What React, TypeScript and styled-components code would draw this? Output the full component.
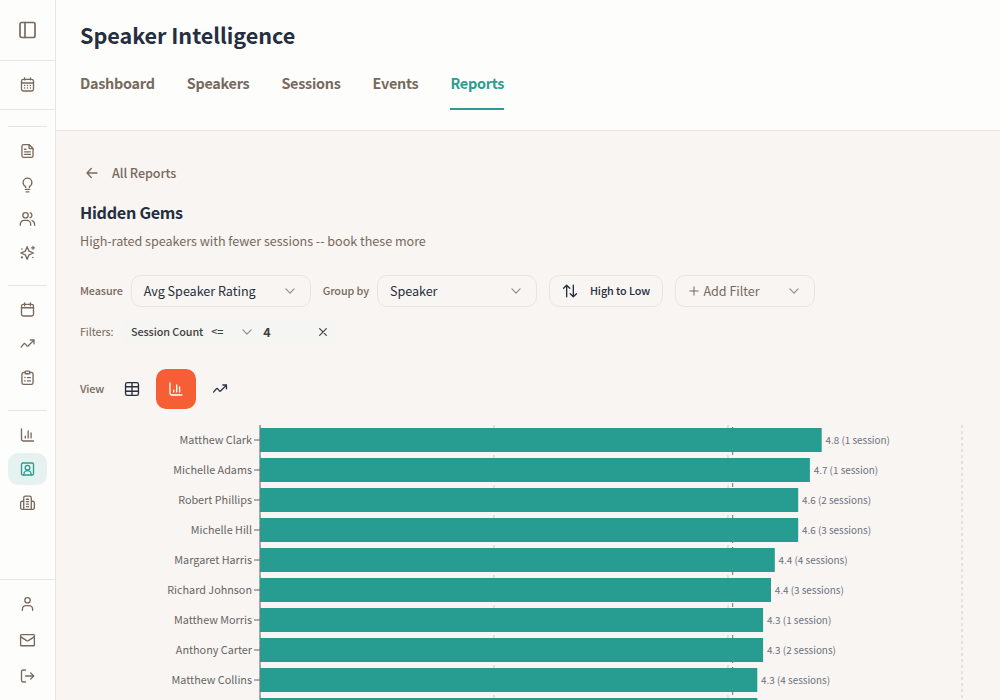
import React from "react";
import styled, { createGlobalStyle, css } from "styled-components";

const teal = "#2a9d8f";
const ink = "#252f3f";
const stone = "#78695d";
const line = "#e8e5e2";

const GlobalStyle = createGlobalStyle`
  * { box-sizing: border-box; }
  body {
    margin: 0;
    height: 700px;
    overflow: hidden;
    background: #f9f5f2;
    color: ${ink};
    font-family: "Noto Sans CJK SC", "Open Sans", sans-serif;
    -webkit-font-smoothing: antialiased;
  }
  button { font: inherit; color: inherit; background: none; border: 0; padding: 0; }
`;

const Shell = styled.div`
  display: flex;
  height: 700px;
  overflow: hidden;
`;

const Sidebar = styled.aside`
  width: 56px;
  flex: none;
  display: flex;
  flex-direction: column;
  background: #fdfdfc;
  border-right: 1px solid ${line};
  color: ${stone};
`;

const SideBlock = styled.div<{ $height: number }>`
  height: ${(p) => p.$height}px;
  display: flex;
  align-items: center;
  justify-content: center;
  border-bottom: 1px solid ${line};
`;

const NavGroups = styled.nav`
  flex: 1;
  padding: 16px 8px 0;
`;

const NavGroup = styled.div`
  display: flex;
  flex-direction: column;
  gap: 2px;
  padding-top: 8px;
  margin-bottom: 16px;
  border-top: 1px solid ${line};
`;

const NavItem = styled.button<{ $active?: boolean }>`
  height: 32px;
  display: flex;
  align-items: center;
  justify-content: center;
  border-radius: 10px;
  ${(p) => p.$active && css`background: #e6f2f0; color: ${teal};`}
`;

const SideFooter = styled.div`
  height: 121px;
  display: flex;
  flex-direction: column;
  gap: 4px;
  padding: 8px;
  border-top: 1px solid ${line};
`;

const Main = styled.main`
  flex: 1;
  min-width: 0;
  display: flex;
  flex-direction: column;
`;

const Header = styled.header`
  height: 131px;
  flex: none;
  padding: 19px 24px 0;
  background: #fdfdfc;
  border-bottom: 1px solid ${line};
`;

const Title = styled.h1`
  margin: 0;
  font-size: 21.6px;
  line-height: 32px;
  font-weight: 700;
  letter-spacing: -0.05px;
`;

const Tabs = styled.div`
  display: flex;
  gap: 32px;
  margin-top: 16px;
`;

const Tab = styled.button<{ $active?: boolean }>`
  height: 43px;
  padding-bottom: 9px;
  font-size: 14.4px;
  line-height: 32px;
  font-weight: 600;
  letter-spacing: -0.265px;
  color: ${(p) => (p.$active ? teal : stone)};
  border-bottom: 2px solid ${(p) => (p.$active ? teal : "transparent")};
`;

const Content = styled.section`
  display: flex;
  flex-direction: column;
  align-items: flex-start;
  padding: 26px 24px 0;
`;

const Caption = styled.span`
  padding-bottom: 2px;
  white-space: nowrap;
`;

const BackButton = styled.button`
  display: flex;
  align-items: center;
  gap: 12px;
  height: 32px;
  padding-left: 4px;
  font-size: 12.6px;
  font-weight: 500;
  letter-spacing: -0.08px;
  color: ${stone};
`;

const ReportTitle = styled.h2`
  margin: 9px 0 0;
  font-size: 16.2px;
  line-height: 28px;
  font-weight: 600;
  letter-spacing: -0.3px;
`;

const Description = styled.p`
  margin: 5px 0 0;
  font-size: 12.6px;
  line-height: 20px;
  letter-spacing: -0.025px;
  color: ${stone};
`;

const Controls = styled.div`
  display: flex;
  align-items: center;
  gap: 12px;
  margin-top: 24px;
`;

const Field = styled.label`
  display: flex;
  align-items: center;
  gap: 8px;
`;

const Label = styled.span<{ $weight?: number }>`
  padding-bottom: 2px;
  font-size: 10.8px;
  line-height: 16px;
  font-weight: ${(p) => p.$weight ?? 500};
  letter-spacing: -0.1px;
  color: ${stone};
`;

const Select = styled.button<{ $width: number; $muted?: boolean }>`
  width: ${(p) => p.$width}px;
  height: 32px;
  display: flex;
  align-items: center;
  justify-content: space-between;
  padding: 0 12px;
  border: 1px solid ${line};
  border-radius: 10px;
  font-size: 12.6px;
  letter-spacing: -0.03px;
  color: ${(p) => (p.$muted ? stone : ink)};
  > svg { color: #8f8b88; }
`;

const WithIcon = styled.span`
  display: flex;
  align-items: center;
  gap: 4px;
  padding-left: 1px;
`;

const SortButton = styled.button`
  height: 32px;
  width: 114.5px;
  display: flex;
  align-items: center;
  gap: 12px;
  padding: 0 12px;
  border: 1px solid ${line};
  border-radius: 10px;
  font-size: 10.8px;
  font-weight: 500;
  letter-spacing: -0.07px;
`;

const FilterRow = styled.div`
  display: flex;
  align-items: center;
  gap: 8px;
  height: 26px;
  margin-top: 12px;
`;

const FilterChip = styled.div`
  display: flex;
  align-items: center;
  height: 26px;
  width: 215px;
  padding: 0 7px 0 9.6px;
  border-radius: 8px;
  background: #f5f5f3;
  color: #44403c;
  font-size: 10.8px;
  font-weight: 500;
  letter-spacing: -0.07px;
`;

const Operator = styled.span`
  display: flex;
  align-items: center;
  justify-content: space-between;
  width: 44px;
  margin: 0 8px;
  > svg { color: #8f8b88; }
`;

const FilterValue = styled(Caption)`
  flex: 1;
  font-size: 12.6px;
  font-weight: 600;
`;

const ViewRow = styled.div`
  display: flex;
  align-items: center;
  gap: 4px;
  margin-top: 24px;
  > span { margin-right: 4px; }
`;

const ViewButton = styled.button<{ $active?: boolean }>`
  width: 40px;
  height: 40px;
  display: flex;
  align-items: center;
  justify-content: center;
  border-radius: 10px;
  color: ${(p) => (p.$active ? "#fff" : ink)};
  background: ${(p) => (p.$active ? "#f65f35" : "transparent")};
`;

const Chart = styled.svg`
  display: block;
  margin-top: 11px;
  text { font-family: inherit; }
`;

const NameLabel = styled.text`
  font-size: 10.8px;
  fill: #666;
  text-anchor: end;
`;

const ValueLabel = styled.text`
  font-size: 9.9px;
  fill: #6b7280;
`;

const Svg = styled.svg<{ $width: number; $height: number }>`
  width: ${(p) => p.$width}px;
  height: ${(p) => p.$height}px;
  flex: none;
  display: block;
  fill: none;
  stroke: currentColor;
  stroke-width: 1.5;
  stroke-linecap: round;
  stroke-linejoin: round;
  .dot { fill: currentColor; stroke: none; }
`;

function Icon({ size = 16, children }: { size?: number; children: React.ReactNode }) {
  return <Svg $width={size} $height={size} viewBox="0 0 18 18">{children}</Svg>;
}

/* An odd width keeps the drawing centred in the 39px wide rail items. */
function RailIcon({ size = 16, children }: { size?: number; children: React.ReactNode }) {
  const pad = 9 / size;
  return (
    <Svg $width={size + 1} $height={size} viewBox={`${-pad} 0 ${18 + pad * 2} 18`}>{children}</Svg>
  );
}

const icons = {
  panel: <><rect x="2.25" y="2.25" width="13.5" height="13.5" rx="1.5" /><path d="M6.75 2.25v13.5" /></>,
  calendarDots: (
    <>
      <path d="M5.75 3.25V.9M12.25 3.25V.9M2.25 6.75h13.5" />
      <rect x="2.25" y="2.75" width="13.5" height="13" rx="2" />
      {[5.75, 9, 12.25].map((x) => [9.5, 12.5].map((y) => <circle key={`${x}-${y}`} className="dot" cx={x} cy={y} r=".85" />))}
    </>
  ),
  file: (
    <>
      <path d="M2.75 14.25V3.75c0-1.1.9-2 2-2h5.59c.26 0 .52.1.7.29l3.92 3.92c.19.18.29.44.29.7v7.59c0 1.1-.9 2-2 2h-8.5c-1.1 0-2-.9-2-2Z" />
      <path d="M15.1 6.25h-3.35a1 1 0 0 1-1-1V1.9M5.75 7h1.5M5.75 9.9h6.5M5.75 12.75h6.5" />
    </>
  ),
  bulb: (
    <>
      <path d="M6.9 11.75v-.9C5.2 10 4.1 8.3 4.1 6.25a4.9 4.9 0 0 1 9.8 0c0 2.05-1.1 3.75-2.8 4.6v.9" />
      <path d="M6.5 13.9h5M7.5 16.75h3" />
    </>
  ),
  users: (
    <>
      <circle cx="6.75" cy="4.75" r="3" />
      <path d="M.95 16v-1.2a4.3 4.3 0 0 1 4.3-4.3h3a4.3 4.3 0 0 1 4.3 4.3V16M11.9 1.9a3 3 0 0 1 0 5.7M14 10.9a4.3 4.3 0 0 1 3 4.1v1" />
    </>
  ),
  sparkles: (
    <>
      <path d="M8.6 1.9 10.7 6.9l5 2.1-5 2.1-2.1 5-2.1-5-5-2.1 5-2.1Z" />
      <path strokeWidth="1.4" d="M15.2 1.5v3.4M13.5 3.2h3.4" />
      <circle className="dot" cx="15" cy="14" r=".9" />
      <circle className="dot" cx="2.7" cy="4.6" r=".9" />
      <circle className="dot" cx="2.7" cy="14" r="1.3" />
    </>
  ),
  calendar: <><path d="M5.75 4.25V.9M12.25 4.25V.9M2.25 6.5h13.5" /><rect x="2.25" y="2.75" width="13.5" height="13" rx="2" /></>,
  trend: <><path d="m1.75 12.5 3.1-3.7c.4-.48 1.1-.48 1.5 0l2 2.3c.4.48 1.15.45 1.5-.05L16 4.9" /><path d="M12.2 4.5h4.05v4.2" /></>,
  clipboard: (
    <>
      <path d="M6.25 2.75h-1.5a2 2 0 0 0-2 2v9.5c0 1.1.9 2 2 2h8.5a2 2 0 0 0 2-2v-9.5a2 2 0 0 0-2-2h-1.5" />
      <rect x="6.25" y="1.25" width="5.5" height="3" rx="1" />
      <path d="M9 8.5h3.25M9 12.25h3.25" />
      <circle className="dot" cx="6.1" cy="8.5" r=".9" /><circle className="dot" cx="6.1" cy="12.25" r=".9" />
    </>
  ),
  bars: <path d="M2.25 2.25v11.5c0 1.1.9 2 2 2h11.5M6.5 12.25v-2M9.75 12.25V4.5M13 12.25v-5.5" />,
  badge: (
    <>
      <rect x="2.25" y="2.25" width="13.5" height="13.5" rx="1.5" />
      <circle cx="9" cy="7.5" r="2.6" />
      <path d="M5 15.5v-.7a4 4 0 0 1 8 0v.7" />
    </>
  ),
  building: (
    <>
      <path d="M4.75 16.25V3.25c0-1.1.9-2 2-2h4.5c1.1 0 2 .9 2 2v13M4.75 7h-1.5c-1.1 0-2 .9-2 2v5.25c0 1.1.9 2 2 2h11.5a2 2 0 0 0 2-2V9c0-1.1-.9-2-2-2h-1.5" />
      <path d="M7.75 4.75h2.5M7.75 7.5h2.5M7.75 10.25h2.5M7.75 13h2.5" />
    </>
  ),
  user: <><circle cx="9" cy="4.75" r="3" /><path d="M3.25 16v-1.25a4 4 0 0 1 4-4h3.5a4 4 0 0 1 4 4V16" /></>,
  mail: <><rect x="1.25" y="3" width="15.5" height="12.5" rx="1" /><path d="m1.5 5.5 6.5 4.2c.62.4 1.38.4 2 0l6.5-4.2" /></>,
  logout: <path d="M6.75 2.25h-2.5a2 2 0 0 0-2 2v9.5c0 1.1.9 2 2 2h2.5M6.75 9h9M12.5 5.5 16 9l-3.5 3.5" />,
  back: <path d="M14.6 9H3.6M8.2 4 3.4 9l4.8 5" />,
  chevron: <path strokeWidth="1.3" d="M4.4 6.7 9 11.3l4.6-4.6" />,
  sort: <path d="M5.25 15.5V2.5M1.75 6l3.5-3.5L8.75 6M12.75 2.5v13M9.25 12l3.5 3.5 3.5-3.5" />,
  plus: <path strokeWidth="1.8" d="M9 1.5v15M1.5 9h15" />,
  close: <path strokeWidth="1.8" d="m4 4 10 10M14 4 4 14" />,
  table: <><rect x="1.75" y="1.75" width="14.5" height="14.5" rx="2" /><path d="M1.75 6.5h14.5M1.75 11.5h14.5M9 1.75v14.5" /></>,
};

type IconName = keyof typeof icons;

const navGroups: IconName[][] = [
  ["file", "bulb", "users", "sparkles"],
  ["calendar", "trend", "clipboard"],
  ["bars", "badge", "building"],
];

const speakers = [
  { name: "Matthew Clark", end: 741.7, label: "4.8 (1 session)" },
  { name: "Michelle Adams", end: 729.9, label: "4.7 (1 session)" },
  { name: "Robert Phillips", end: 718.2, label: "4.6 (2 sessions)" },
  { name: "Michelle Hill", end: 718.2, label: "4.6 (3 sessions)" },
  { name: "Margaret Harris", end: 694.8, label: "4.4 (4 sessions)" },
  { name: "Richard Johnson", end: 691, label: "4.4 (3 sessions)" },
  { name: "Matthew Morris", end: 683.1, label: "4.3 (1 session)" },
  { name: "Anthony Carter", end: 683.1, label: "4.3 (2 sessions)" },
  { name: "Matthew Collins", end: 677.3, label: "4.3 (4 sessions)" },
];

function RatingChart() {
  return (
    <Chart width="896" height="280" viewBox="0 0 896 280">
      {[180, 414, 648, 882].map((x) => (
        <line key={x} x1={x} x2={x} y1="5" y2="280" stroke="#ccc" strokeDasharray="3 3" />
      ))}
      <line x1="180" x2="180" y1="5" y2="280" stroke="#666" />
      <line x1="652.7" x2="652.7" y1="5" y2="280" stroke="#6b7280" strokeDasharray="4 4" strokeDashoffset="6" />
      {speakers.map((s, i) => (
        <g key={s.name}>
          <line x1="174" x2="180" y1={20 + i * 30} y2={20 + i * 30} stroke="#666" />
          <rect x="180" y={8 + i * 30} width={s.end - 180} height="24" fill="#279d91" />
          <NameLabel x="172" y={24 + i * 30}>{s.name}</NameLabel>
          <ValueLabel x={s.end + 3.8} y={24 + i * 30}>{s.label}</ValueLabel>
        </g>
      ))}
      <rect x="180" y="278" width="497.3" height="24" fill="#279d91" />
    </Chart>
  );
}

export default function App() {
  return (
    <Shell>
      <GlobalStyle />
      <Sidebar>
        <SideBlock $height={61}><RailIcon size={20}>{icons.panel}</RailIcon></SideBlock>
        <SideBlock $height={49}><RailIcon>{icons.calendarDots}</RailIcon></SideBlock>
        <NavGroups>
          {navGroups.map((group) => (
            <NavGroup key={group[0]}>
              {group.map((name) => (
                <NavItem key={name} $active={name === "badge"}><RailIcon>{icons[name]}</RailIcon></NavItem>
              ))}
            </NavGroup>
          ))}
        </NavGroups>
        <SideFooter>
          {(["user", "mail", "logout"] as IconName[]).map((name) => (
            <NavItem key={name}><RailIcon>{icons[name]}</RailIcon></NavItem>
          ))}
        </SideFooter>
      </Sidebar>
      <Main>
        <Header>
          <Title>Speaker Intelligence</Title>
          <Tabs>
            {["Dashboard", "Speakers", "Sessions", "Events", "Reports"].map((t) => (
              <Tab key={t} $active={t === "Reports"}>{t}</Tab>
            ))}
          </Tabs>
        </Header>
        <Content>
          <BackButton><Icon>{icons.back}</Icon><Caption>All Reports</Caption></BackButton>
          <ReportTitle>Hidden Gems</ReportTitle>
          <Description>High-rated speakers with fewer sessions -- book these more</Description>
          <Controls>
            <Field>
              <Label>Measure</Label>
              <Select $width={180}><Caption>Avg Speaker Rating</Caption><Icon>{icons.chevron}</Icon></Select>
            </Field>
            <Field>
              <Label>Group by</Label>
              <Select $width={160}><Caption>Speaker</Caption><Icon>{icons.chevron}</Icon></Select>
            </Field>
            <SortButton><Icon>{icons.sort}</Icon><Caption>High to Low</Caption></SortButton>
            <Select $width={140} $muted>
              <WithIcon><Icon size={10}>{icons.plus}</Icon><Caption>Add Filter</Caption></WithIcon>
              <Icon>{icons.chevron}</Icon>
            </Select>
          </Controls>
          <FilterRow>
            <Label $weight={400}>Filters:</Label>
            <FilterChip>
              <Caption>Session Count</Caption>
              <Operator><Caption>&lt;=</Caption><Icon>{icons.chevron}</Icon></Operator>
              <FilterValue>4</FilterValue>
              <Icon size={12}>{icons.close}</Icon>
            </FilterChip>
          </FilterRow>
          <ViewRow>
            <Label>View</Label>
            <ViewButton><Icon>{icons.table}</Icon></ViewButton>
            <ViewButton $active><Icon>{icons.bars}</Icon></ViewButton>
            <ViewButton><Icon>{icons.trend}</Icon></ViewButton>
          </ViewRow>
          <RatingChart />
        </Content>
      </Main>
    </Shell>
  );
}
